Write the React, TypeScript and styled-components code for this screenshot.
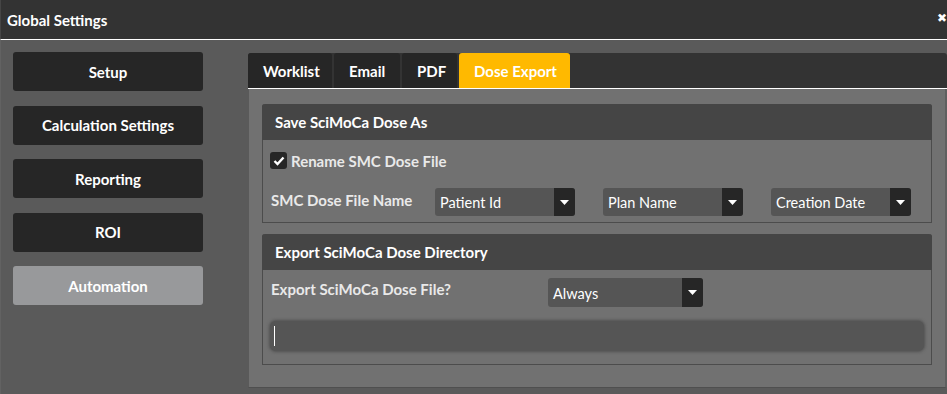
import React from "react";
import styled, { createGlobalStyle } from "styled-components";

const Global = createGlobalStyle`
  html, body { margin: 0; padding: 0; background: #5a5a5a; }
  body { font-family: "Lato", "Open Sans", "Liberation Sans", sans-serif; -webkit-font-smoothing: antialiased; }
  * { box-sizing: border-box; }
`;

const Window = styled.div`
  width: 947px;
  height: 394px;
  overflow: hidden;
  background: #5a5a5a;
  display: flex;
  flex-direction: column;
`;

const TitleBar = styled.div`
  height: 40px;
  flex: none;
  background: #333333;
  border-bottom: 1px solid #ffffff;
  border-left: 1px solid #454545;
  display: flex;
  align-items: center;
  justify-content: space-between;
  padding-left: 6px;
`;

const Title = styled.span`
  color: #ffffff;
  font-weight: 700;
  font-size: 15px;
`;

const Close = styled.span`
  color: #ffffff;
  font-size: 12px;
  margin-right: 0;
  margin-top: -3px;
  font-family: "DejaVu Sans", sans-serif;
`;

const Body = styled.div`
  flex: 1;
  display: flex;
  align-items: flex-start;
  padding: 12px 0 0 12px;
  border-left: 1px solid #626262;
`;

const Sidebar = styled.nav`
  width: 190px;
  flex: none;
  display: flex;
  flex-direction: column;
  gap: 14.5px;
`;

const SideButton = styled.div<{ $active?: boolean }>`
  height: 39px;
  border-radius: 3px;
  background: ${(p) => (p.$active ? "#98999b" : "#262626")};
  color: #ffffff;
  font-weight: 700;
  font-size: 15px;
  display: flex;
  align-items: center;
  justify-content: center;
`;

const Main = styled.div`
  margin-left: 45px;
  margin-top: 1px;
  width: 699px;
  flex: none;
  display: flex;
  flex-direction: column;
`;

const TabBar = styled.div`
  height: 36px;
  background: #333333;
  border-radius: 3px 3px 0 0;
  border-bottom: 1px solid #ffffff;
  display: flex;
  align-items: stretch;
  gap: 2px;
`;

const Tab = styled.div<{ $active?: boolean; $w: number }>`
  width: ${(p) => p.$w}px;
  border-radius: 3px 3px 0 0;
  background: ${(p) => (p.$active ? "#ffb900" : "#262626")};
  color: #ffffff;
  font-weight: 700;
  font-size: 15px;
  display: flex;
  align-items: center;
  padding-left: 15px;
`;

const Content = styled.div`
  height: 299px;
  background: #717171;
  border-left: 1px solid #5a5a5a;
  border-right: 2px solid #5f5f5f;
  border-bottom: 1px solid #4f4f4f;
  padding: 15px 13px 0 13px;
  display: flex;
  flex-direction: column;
  gap: 11px;
`;

const Section = styled.section`
  border: 1px solid #4c4c4c;
  border-top: none;
  border-radius: 3px 3px 0 0;
`;

const SectionHeader = styled.div`
  height: 36px;
  background: #454545;
  border-radius: 3px 3px 0 0;
  margin: 0 -1px;
  color: #ffffff;
  font-weight: 700;
  font-size: 15px;
  display: flex;
  align-items: center;
  padding-left: 13px;
`;

const SectionBody = styled.div<{ $pt: number; $pb: number; $gap: number }>`
  padding: ${(p) => p.$pt}px 7px ${(p) => p.$pb}px 7px;
  display: flex;
  flex-direction: column;
  gap: ${(p) => p.$gap}px;
`;

const CheckRow = styled.label`
  display: flex;
  align-items: center;
  gap: 4px;
  color: #e9e9e9;
  font-weight: 700;
  font-size: 15px;
  height: 17px;
`;

const CheckBox = styled.span`
  width: 17px;
  height: 17px;
  border-radius: 3px;
  background: #262626;
  display: flex;
  align-items: center;
  justify-content: center;
`;

const FieldRow = styled.div<{ $labelW: number }>`
  display: grid;
  grid-template-columns: ${(p) => p.$labelW}px repeat(3, 140px);
  column-gap: 28px;
  align-items: center;
`;

const FieldLabel = styled.span<{ $shift?: number }>`
  color: #e9e9e9;
  font-weight: 700;
  font-size: 15px;
  padding-left: 1px;
  white-space: nowrap;
  margin-top: ${(p) => p.$shift ?? 0}px;
  align-self: ${(p) => (p.$shift ? "start" : "center")};
`;

const Select = styled.div<{ $w?: number; $h?: number }>`
  width: ${(p) => (p.$w ? `${p.$w}px` : "auto")};
  height: ${(p) => p.$h ?? 28}px;
  background: #555555;
  border-radius: 3px;
  display: flex;
  align-items: stretch;
  overflow: hidden;
`;

const SelectValue = styled.span`
  flex: 1;
  color: #ffffff;
  font-size: 14.5px;
  display: flex;
  align-items: center;
  padding-left: 5px;
  padding-top: 1px;
`;

const Arrow = styled.span`
  width: 21px;
  background: #262626;
  display: flex;
  align-items: center;
  justify-content: center;
`;

const ExportRow = styled.div`
  display: grid;
  grid-template-columns: 278px 155px;
  align-items: start;
`;

const TextInput = styled.div`
  height: 30px;
  background: #555555;
  border-radius: 6px;
  box-shadow: 0 0 3px 1px rgba(60, 60, 60, 0.6);
  display: flex;
  align-items: center;
  padding-left: 4px;
`;

const Caret = styled.span`
  width: 1px;
  height: 20px;
  background: #ffffff;
`;

const Tri = () => (
  <svg width="9" height="5" viewBox="0 0 9 5">
    <path d="M0 0 L9 0 L4.5 5 Z" fill="#ffffff" />
  </svg>
);

const Dropdown = ({ value, w, h }: { value: string; w?: number; h?: number }) => (
  <Select $w={w} $h={h}>
    <SelectValue>{value}</SelectValue>
    <Arrow>
      <Tri />
    </Arrow>
  </Select>
);

export default function App() {
  return (
    <>
      <Global />
      <Window>
        <TitleBar>
          <Title>Global Settings</Title>
          <Close>✖</Close>
        </TitleBar>
        <Body>
          <Sidebar>
            <SideButton>Setup</SideButton>
            <SideButton>Calculation Settings</SideButton>
            <SideButton>Reporting</SideButton>
            <SideButton>ROI</SideButton>
            <SideButton $active>Automation</SideButton>
          </Sidebar>
          <Main>
            <TabBar>
              <Tab $w={84}>Worklist</Tab>
              <Tab $w={66}>Email</Tab>
              <Tab $w={55}>PDF</Tab>
              <Tab $w={111} $active>
                Dose Export
              </Tab>
            </TabBar>
            <Content>
              <Section>
                <SectionHeader>Save SciMoCa Dose As</SectionHeader>
                <SectionBody $pt={12} $pb={6} $gap={19}>
                  <CheckRow>
                    <CheckBox>
                      <svg width="12" height="10" viewBox="0 0 12 10">
                        <path d="M1.5 5 L4.5 8 L10.5 1.5" stroke="#ffffff" strokeWidth="2.4" fill="none" />
                      </svg>
                    </CheckBox>
                    Rename SMC Dose File
                  </CheckRow>
                  <FieldRow $labelW={137}>
                    <FieldLabel $shift={3}>SMC Dose File Name</FieldLabel>
                    <Dropdown value="Patient Id" />
                    <Dropdown value="Plan Name" />
                    <Dropdown value="Creation Date" />
                  </FieldRow>
                </SectionBody>
              </Section>
              <Section>
                <SectionHeader>Export SciMoCa Dose Directory</SectionHeader>
                <SectionBody $pt={8} $pb={13} $gap={14}>
                  <ExportRow>
                    <FieldLabel $shift={2}>Export SciMoCa Dose File?</FieldLabel>
                    <Dropdown value="Always" w={155} h={29} />
                  </ExportRow>
                  <TextInput>
                    <Caret />
                  </TextInput>
                </SectionBody>
              </Section>
            </Content>
          </Main>
        </Body>
      </Window>
    </>
  );
}
